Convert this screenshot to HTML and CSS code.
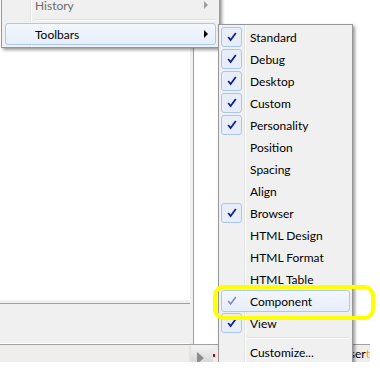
FILE: index.html
```html
<!DOCTYPE html>
<html>
<head>
<meta charset="utf-8">
<link rel="stylesheet" href="styles.css">
</head>
<body>
<div class="screen">
  <div class="app">
    <div class="main">
      <div class="left">
        <div class="editor"></div>
        <div class="panel"></div>
      </div>
      <div class="right"></div>
    </div>
    <div class="status">
      <div class="status-left"></div>
      <div class="play"><svg width="8" height="12" viewBox="0 0 8 12"><path d="M0 0 L7 6 L0 12 Z" fill="#8c8c8c"/></svg></div>
      <div class="mark"></div>
      <div class="status-text">Inser<span class="orange">t</span></div>
    </div>
  </div>

  <div class="menu parent">
    <div class="item disabled"><span class="label">History</span><span class="arrow grey"></span></div>
    <div class="sep"></div>
    <div class="item hot"><span class="label">Toolbars</span><span class="arrow"></span></div>
  </div>

  <div class="menu sub">
    <div class="sitem"><span class="chk on"><svg width="10" height="10" viewBox="0 0 10 10"><path d="M1.2 5 L3.6 8 L8.8 1" fill="none" stroke="#0b1c8c" stroke-width="1.7"/></svg></span><span class="label">Standard</span></div>
    <div class="sitem"><span class="chk on"><svg width="10" height="10" viewBox="0 0 10 10"><path d="M1.2 5 L3.6 8 L8.8 1" fill="none" stroke="#0b1c8c" stroke-width="1.7"/></svg></span><span class="label">Debug</span></div>
    <div class="sitem"><span class="chk on"><svg width="10" height="10" viewBox="0 0 10 10"><path d="M1.2 5 L3.6 8 L8.8 1" fill="none" stroke="#0b1c8c" stroke-width="1.7"/></svg></span><span class="label">Desktop</span></div>
    <div class="sitem"><span class="chk on"><svg width="10" height="10" viewBox="0 0 10 10"><path d="M1.2 5 L3.6 8 L8.8 1" fill="none" stroke="#0b1c8c" stroke-width="1.7"/></svg></span><span class="label">Custom</span></div>
    <div class="sitem"><span class="chk on"><svg width="10" height="10" viewBox="0 0 10 10"><path d="M1.2 5 L3.6 8 L8.8 1" fill="none" stroke="#0b1c8c" stroke-width="1.7"/></svg></span><span class="label">Personality</span></div>
    <div class="sitem"><span class="chk"></span><span class="label">Position</span></div>
    <div class="sitem"><span class="chk"></span><span class="label">Spacing</span></div>
    <div class="sitem"><span class="chk"></span><span class="label">Align</span></div>
    <div class="sitem"><span class="chk on"><svg width="10" height="10" viewBox="0 0 10 10"><path d="M1.2 5 L3.6 8 L8.8 1" fill="none" stroke="#0b1c8c" stroke-width="1.7"/></svg></span><span class="label">Browser</span></div>
    <div class="sitem"><span class="chk"></span><span class="label">HTML Design</span></div>
    <div class="sitem"><span class="chk"></span><span class="label">HTML Format</span></div>
    <div class="sitem"><span class="chk"></span><span class="label">HTML Table</span></div>
    <div class="sitem hot"><span class="chk"><svg width="10" height="10" viewBox="0 0 10 10"><path d="M1.2 5 L3.6 8 L8.8 1" fill="none" stroke="#7886cc" stroke-width="1.5"/></svg></span><span class="label">Component</span></div>
    <div class="sitem"><span class="chk on"><svg width="10" height="10" viewBox="0 0 10 10"><path d="M1.2 5 L3.6 8 L8.8 1" fill="none" stroke="#0b1c8c" stroke-width="1.7"/></svg></span><span class="label">View</span></div>
    <div class="ssep"></div>
    <div class="sitem"><span class="chk"></span><span class="label">Customize...</span></div>
  </div>

  <div class="annot"></div>
</div>
</body>
</html>
```

FILE: styles.css
```css
html, body {
  margin: 0;
  padding: 0;
  background: #fff;
}
body {
  font-family: Lato, "Liberation Sans", sans-serif;
  font-size: 12px;
  color: #000;
}
.screen {
  position: relative;
  width: 380px;
  height: 362px;
  overflow: hidden;
  background: #fff;
}
.app {
  width: 370px;
  height: 362px;
  display: flex;
  flex-direction: column;
  overflow: hidden;
}
.main {
  height: 344px;
  display: flex;
  border-bottom: 1px solid #a0a0a0;
}
.left {
  width: 190px;
  border-right: 3px solid #f0f0f0;
  display: flex;
  flex-direction: column;
}
.editor {
  height: 300px;
  background: #fff;
  border-bottom: 3px solid #f0f0f0;
}
.panel {
  flex: 1;
  background: #f0f0f0;
  border-top: 1px solid #a0a0a0;
  border-bottom: 1px solid #fff;
}
.right {
  flex: 1;
  background: #fff;
  border-left: 1px solid #a0a0a0;
}
.status {
  flex: 1;
  display: flex;
  background: #f0eeed;
}
.status-left {
  width: 193px;
  border-right: 2px solid #e4e2e1;
}
.play {
  width: 22px;
  display: flex;
  align-items: flex-end;
  padding-left: 6px;
  box-sizing: border-box;
  background: linear-gradient(#f4f4f4, #d8d8d8);
}
.play svg {
  display: block;
  margin-bottom: -2px;
}
.mark {
  width: 2px;
  height: 3px;
  margin-top: 9px;
  background: #c00000;
}
.status-text {
  margin-left: 125px;
  line-height: 17px;
  white-space: nowrap;
  position: relative;
  z-index: 1;
}
.orange {
  color: #f0a030;
}

/* menus */
.menu {
  position: absolute;
  box-sizing: border-box;
  border: 1px solid #979797;
  box-shadow: 2px 2px 3px rgba(0, 0, 0, 0.4);
}
.parent {
  left: 1px;
  top: -9px;
  width: 219px;
  padding: 2px 3px 2px 3px;
  background: linear-gradient(to right, transparent 28px, #e2e3e3 28px, #e2e3e3 29px, #fff 29px, #fff 30px, transparent 30px), #f0f0f0;
}
.item {
  height: 22px;
  box-sizing: border-box;
  display: flex;
  align-items: center;
  padding-left: 29px;
  padding-right: 7px;
  border: 1px solid transparent;
  border-radius: 3px;
}
.item .label {
  flex: 1;
}
.item.disabled {
  color: #6d6d6d;
}
.hot {
  border: 1px solid #a9c9f0;
  border-radius: 3px;
  background: linear-gradient(#f3f7fd, #e6eefa);
}
.arrow {
  width: 0;
  height: 0;
  border-top: 4px solid transparent;
  border-bottom: 4px solid transparent;
  border-left: 4px solid #000;
}
.arrow.grey {
  border-left-color: #a0a0a0;
}
.sep {
  height: 7px;
  margin-left: 30px;
  box-sizing: border-box;
  padding-top: 3px;
}
.sep::before {
  content: "";
  display: block;
  height: 1px;
  background: #e0e0e0;
  border-bottom: 1px solid #fff;
}

.sub {
  left: 218px;
  top: 24px;
  width: 135px;
  padding: 1px 2px 2px 2px;
  z-index: 2;
  background: linear-gradient(to right, transparent 25px, #e2e3e3 25px, #e2e3e3 26px, #fff 26px, #fff 27px, transparent 27px), #f0f0f0;
}
.sitem {
  height: 22px;
  box-sizing: border-box;
  display: flex;
  align-items: center;
  border: 1px solid transparent;
}
.sitem.hot {
  border-color: #a9c9f0;
}
.chk {
  width: 21px;
  height: 20px;
  box-sizing: border-box;
  margin-left: -1px;
  display: flex;
  align-items: center;
  justify-content: center;
  border: 1px solid transparent;
  border-radius: 3px;
}
.chk.on {
  border-color: #a9c6ee;
  background: #e8eef9;
}
.chk svg {
  display: block;
}
.sitem .label {
  margin-left: 8px;
}
.ssep {
  height: 7px;
  margin-left: 26px;
  padding-top: 3px;
  box-sizing: border-box;
}
.ssep::before {
  content: "";
  display: block;
  height: 1px;
  background: #e0e0e0;
  border-bottom: 1px solid #fff;
}

.annot {
  position: absolute;
  left: 213px;
  top: 285px;
  width: 162px;
  height: 35px;
  box-sizing: border-box;
  border: 4px solid #ffff00;
  border-radius: 11px;
  z-index: 3;
}
```
